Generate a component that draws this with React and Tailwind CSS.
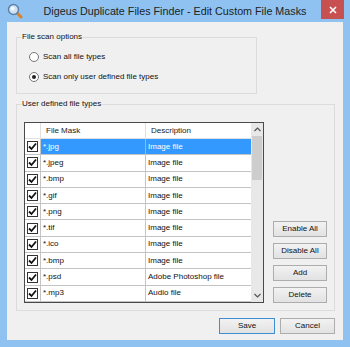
import React from "react";

const rows = [
  { mask: "*.jpg", desc: "Image file" },
  { mask: "*.jpeg", desc: "Image file" },
  { mask: "*.bmp", desc: "Image file" },
  { mask: "*.gif", desc: "Image file" },
  { mask: "*.png", desc: "Image file" },
  { mask: "*.tif", desc: "Image file" },
  { mask: "*.ico", desc: "Image file" },
  { mask: "*.bmp", desc: "Image file" },
  { mask: "*.psd", desc: "Adobe Photoshop file" },
  { mask: "*.mp3", desc: "Audio file" },
];

function Check() {
  return (
    <div className="w-[11px] h-[11px] border border-[#333] bg-white flex items-center justify-center">
      <svg width="9" height="9" viewBox="0 0 9 9">
        <path d="M1 4.5 L3.5 7 L8 1.5" fill="none" stroke="#111" strokeWidth="1.8" />
      </svg>
    </div>
  );
}

function Radio({ checked }) {
  return (
    <div className="w-[10px] h-[10px] rounded-full border border-[#777] bg-white flex items-center justify-center">
      {checked && <div className="w-[4px] h-[4px] rounded-full bg-[#222]" />}
    </div>
  );
}

function Btn({ children, primary, w = "w-[54px]" }) {
  return (
    <button
      className={`${w} h-[16px] flex items-center justify-center text-[8px] leading-none text-[#111] bg-gradient-to-b from-[#f2f2f2] to-[#e2e2e2] border ${
        primary ? "border-[#3d8ed6]" : "border-[#adadad]"
      }`}
    >
      {children}
    </button>
  );
}

export default function App() {
  return (
    <div
      className="w-[350px] h-[347px] bg-[#8fc2f1] flex flex-col"
      style={{ fontFamily: '"Liberation Sans", Arial, sans-serif' }}
    >
      {/* Title bar */}
      <div className="relative h-[22px] shrink-0 flex items-center justify-center">
        <svg className="absolute left-[7px] top-[3px]" width="16" height="16" viewBox="0 0 16 16">
          <line x1="9.5" y1="9.5" x2="14" y2="14" stroke="#d9822b" strokeWidth="3" strokeLinecap="round" />
          <circle cx="6.5" cy="6.5" r="5" fill="#cfe3f5" stroke="#5a7fa8" strokeWidth="1.4" />
          <circle cx="5.5" cy="5.5" r="2" fill="#ffffff" opacity="0.8" />
        </svg>
        <span className="text-[10.75px] text-[#222] leading-none">
          Digeus Duplicate Files Finder - Edit Custom File Masks
        </span>
        <div className="absolute right-[6px] top-0 w-[23px] h-[19px] bg-[#c75050] flex items-center justify-center">
          <svg width="8" height="8" viewBox="0 0 8 8">
            <path d="M1 1 L7 7 M7 1 L1 7" stroke="#fff" strokeWidth="1.6" />
          </svg>
        </div>
      </div>

      {/* Client area */}
      <div className="mx-[7px] mb-[7px] flex-1 bg-[#f0f0f0] flex flex-col pl-[9px] pr-[8px] text-[8px] text-[#111]">
        <fieldset className="mt-[9px] w-[241px] h-[63px] border border-[#dcdcdc]">
          <legend className="ml-[4px] px-[1px] leading-[12px]">File scan options</legend>
          <div className="flex flex-col gap-[6px] pt-[7px] pl-[12px]">
            <div className="flex items-center gap-[4px] h-[14px]">
              <Radio />
              <span>Scan all file types</span>
            </div>
            <div className="flex items-center gap-[4px] h-[14px]">
              <Radio checked />
              <span>Scan only user defined file types</span>
            </div>
          </div>
        </fieldset>

        <fieldset className="mt-[4px] w-[319px] h-[213px] border border-[#dcdcdc]">
          <legend className="ml-[4px] px-[1px] leading-[12px]">User defined file types</legend>
          <div className="flex items-end pl-[7px] pt-[12px]">
            {/* List view */}
            <div className="w-[240px] h-[181px] border border-[#4a4a4a] bg-white flex">
              <div className="flex-1 flex flex-col">
                <div className="h-[16px] flex border-b border-[#e0e0e0] text-[#222]">
                  <div className="w-[16px] border-r border-[#e0e0e0]" />
                  <div className="w-[105px] border-r border-[#e0e0e0] pl-[5px] flex items-center">File Mask</div>
                  <div className="flex-1 pl-[5px] flex items-center">Description</div>
                </div>
                {rows.map((r, i) => {
                  const sel = i === 0;
                  return (
                    <div key={i} className="h-[16.3px] flex border-b border-[#c4c4c4]">
                      <div className="w-[16px] border-r border-[#c4c4c4] flex items-center justify-center">
                        <Check />
                      </div>
                      <div
                        className={`w-[105px] border-r pl-[2px] flex items-center ${
                          sel ? "bg-[#3399ff] text-white border-[#7fbfff]" : "border-[#c4c4c4]"
                        }`}
                      >
                        {r.mask}
                      </div>
                      <div className={`flex-1 pl-[2px] flex items-center ${sel ? "bg-[#3399ff] text-white" : ""}`}>
                        {r.desc}
                      </div>
                    </div>
                  );
                })}
              </div>
              {/* Scrollbar */}
              <div className="w-[12px] bg-[#e8e8e8] flex flex-col items-center">
                <div className="h-[13px] flex items-center justify-center">
                  <svg width="7" height="5" viewBox="0 0 7 5">
                    <path d="M0.5 4 L3.5 1 L6.5 4" fill="none" stroke="#555" strokeWidth="1.2" />
                  </svg>
                </div>
                <div className="w-[10px] h-[44px] bg-[#cdcdcd]" />
                <div className="flex-1" />
                <div className="h-[13px] flex items-center justify-center">
                  <svg width="7" height="5" viewBox="0 0 7 5">
                    <path d="M0.5 1 L3.5 4 L6.5 1" fill="none" stroke="#555" strokeWidth="1.2" />
                  </svg>
                </div>
              </div>
            </div>

            <div className="ml-[9px] flex flex-col gap-[6px]">
              <Btn>Enable All</Btn>
              <Btn>Disable All</Btn>
              <Btn>Add</Btn>
              <Btn>Delete</Btn>
            </div>
          </div>
        </fieldset>

        <div className="mt-[7px] flex justify-end gap-[5px]">
          <Btn primary w="w-[56px]">Save</Btn>
          <Btn w="w-[55px]">Cancel</Btn>
        </div>
      </div>
    </div>
  );
}
